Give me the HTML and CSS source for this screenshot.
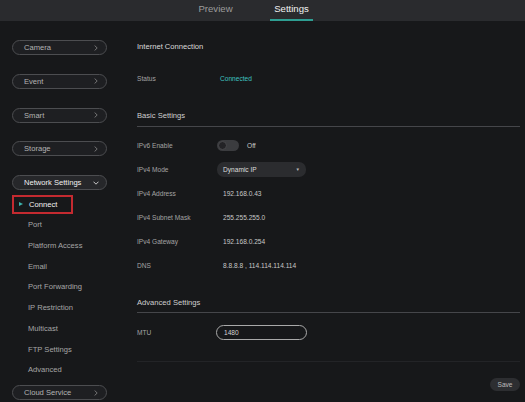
FILE: index.html
```html
<!DOCTYPE html>
<html>
<head>
<meta charset="utf-8">
<link rel="stylesheet" href="styles.css">
</head>
<body>
<div class="page">
  <header class="topbar">
    <div class="tab">Preview</div>
    <div class="tab active">Settings</div>
  </header>
  <div class="main">
    <nav class="sidebar">
      <div class="pill"><span>Camera</span><svg class="chev" viewBox="0 0 4 6"><path d="M0.6 0.5 L3.2 3 L0.6 5.5" fill="none" stroke="currentColor" stroke-width="0.8"/></svg></div>
      <div class="pill"><span>Event</span><svg class="chev" viewBox="0 0 4 6"><path d="M0.6 0.5 L3.2 3 L0.6 5.5" fill="none" stroke="currentColor" stroke-width="0.8"/></svg></div>
      <div class="pill"><span>Smart</span><svg class="chev" viewBox="0 0 4 6"><path d="M0.6 0.5 L3.2 3 L0.6 5.5" fill="none" stroke="currentColor" stroke-width="0.8"/></svg></div>
      <div class="pill"><span>Storage</span><svg class="chev" viewBox="0 0 4 6"><path d="M0.6 0.5 L3.2 3 L0.6 5.5" fill="none" stroke="currentColor" stroke-width="0.8"/></svg></div>
      <div class="pill open"><span>Network Settings</span><svg class="chev down" viewBox="0 0 6 4"><path d="M0.5 0.7 L3 3.2 L5.5 0.7" fill="none" stroke="currentColor" stroke-width="0.9"/></svg></div>
      <ul class="submenu">
        <li class="sub current"><span class="box"><span class="tri"></span>Connect</span></li>
        <li class="sub">Port</li>
        <li class="sub">Platform Access</li>
        <li class="sub">Email</li>
        <li class="sub">Port Forwarding</li>
        <li class="sub">IP Restriction</li>
        <li class="sub">Multicast</li>
        <li class="sub">FTP Settings</li>
        <li class="sub">Advanced</li>
      </ul>
      <div class="pill last"><span>Cloud Service</span><svg class="chev" viewBox="0 0 4 6"><path d="M0.6 0.5 L3.2 3 L0.6 5.5" fill="none" stroke="currentColor" stroke-width="0.8"/></svg></div>
    </nav>
    <section class="content">
      <h2 class="title">Internet Connection</h2>
      <div class="row status"><span class="label">Status</span><span class="connected">Connected</span></div>
      <h3 class="section">Basic Settings</h3>
      <div class="row"><span class="label">IPv6 Enable</span><span class="toggle"><span class="knob"></span></span><span class="off">Off</span></div>
      <div class="row"><span class="label">IPv4 Mode</span><span class="select">Dynamic IP<span class="caret">&#9660;</span></span></div>
      <div class="row"><span class="label">IPv4 Address</span><span class="value">192.168.0.43</span></div>
      <div class="row"><span class="label">IPv4 Subnet Mask</span><span class="value">255.255.255.0</span></div>
      <div class="row"><span class="label">IPv4 Gateway</span><span class="value">192.168.0.254</span></div>
      <div class="row"><span class="label">DNS</span><span class="value">8.8.8.8 , 114.114.114.114</span></div>
      <h3 class="section adv">Advanced Settings</h3>
      <div class="row mtu"><span class="label">MTU</span><span class="input">1480</span></div>
      <div class="faint"></div>
      <div class="actions"><button class="save">Save</button></div>
    </section>
  </div>
</div>
</body>
</html>
```
FILE: styles.css
```css
* { box-sizing: border-box; margin: 0; padding: 0; }
html, body { background: #17181a; }
body {
  width: 525px;
  height: 402px;
  overflow: hidden;
  font-family: "Liberation Sans", Arial, sans-serif;
  color: #b0b0b0;
}
.page { width: 525px; height: 402px; display: flex; flex-direction: column; }

.topbar {
  height: 21px;
  background: #2a2b2e;
  display: flex;
  padding-left: 194px;
  gap: 33px;
}
.tab {
  width: 43px;
  height: 21px;
  font-size: 9.6px;
  line-height: 17px;
  text-align: center;
  color: #9c9c9c;
}
.tab.active {
  color: #f2f2f2;
  border-bottom: 2px solid #2e9e92;
}

.main { flex: 1; display: flex; }

.sidebar {
  width: 120px;
  padding-top: 19px;
  padding-left: 12px;
  display: flex;
  flex-direction: column;
}
.pill {
  width: 95px;
  height: 15px;
  border: 1px solid #4c4d50;
  border-radius: 8px;
  background: #1e1f22;
  display: flex;
  align-items: center;
  justify-content: space-between;
  padding: 0 8px 0 11px;
  font-size: 7.6px;
  color: #b4b4b4;
  margin-bottom: 18.8px;
}
.pill.open {
  background: #26272a;
  color: #f0f0f0;
  margin-bottom: 3.7px;
}
.pill.last { margin-top: 5px; margin-bottom: 0; }
.chev { width: 4px; height: 6px; color: #8a8a8a; }
.chev.down { width: 6px; height: 4px; color: #dcdcdc; margin-right: -1px; }

.submenu { list-style: none; }
.sub {
  height: 20.7px;
  display: flex;
  align-items: center;
  padding-left: 16px;
  font-size: 7.6px;
  color: #a6a6a6;
}
.sub.current { padding-left: 0; }
.box {
  width: 61px;
  height: 19px;
  border: 2px solid #c42a30;
  display: flex;
  align-items: center;
  padding-left: 5px;
  color: #f4f4f4;
}
.tri {
  width: 0;
  height: 0;
  border-left: 4px solid #3cb3ad;
  border-top: 2.5px solid transparent;
  border-bottom: 2.5px solid transparent;
  margin-right: 6px;
}

.content {
  flex: 1;
  padding: 17px 5px 0 17px;
  display: flex;
  flex-direction: column;
}
.title {
  height: 18px;
  line-height: 18px;
  font-size: 7.6px;
  font-weight: normal;
  color: #dcdcdc;
}
.row {
  height: 24px;
  display: flex;
  align-items: center;
  font-size: 6.6px;
}
.row.status { margin-top: 13px; height: 18px; }
.label { width: 80px; color: #a4a4a4; flex-shrink: 0; }
.connected { color: #3fc3c0; padding-left: 3px; }
.value { color: #c8c8c8; padding-left: 6px; }
.section {
  height: 20px;
  line-height: 20px;
  font-size: 7.6px;
  font-weight: normal;
  color: #cfcfcf;
  border-bottom: 1px solid #45464a;
  margin-top: 19px;
  margin-bottom: 6px;
  height: 21px;
}
.section.adv { margin-top: 16px; margin-bottom: 7px; height: 20px; line-height: 19px; }

.toggle {
  width: 22px;
  height: 11px;
  border-radius: 6px;
  background: #3b3c3f;
  display: flex;
  align-items: center;
  padding-left: 1px;
}
.knob {
  width: 9px;
  height: 9px;
  border-radius: 50%;
  background: #232326;
  border: 1.5px solid #49494c;
}
.off { color: #c8c8c8; margin-left: 8px; }
.select {
  width: 89px;
  height: 15px;
  border-radius: 7px;
  background: #2b2c2f;
  color: #dcdcdc;
  display: flex;
  align-items: center;
  justify-content: space-between;
  padding: 0 6px 0 6px;
}
.caret { font-size: 4.5px; color: #b8b8b8; }
.input {
  width: 91px;
  height: 15px;
  border: 1.5px solid #a9a9a9;
  border-radius: 8px;
  color: #d4d4d4;
  display: flex;
  align-items: center;
  padding-left: 7px;
  margin-left: -1px;
}
.faint {
  height: 1px;
  background: #232427;
  margin-top: 17px;
}
.actions {
  display: flex;
  justify-content: flex-end;
  margin-top: 16px;
}
.save {
  width: 30px;
  height: 13px;
  border: none;
  border-radius: 7px;
  background: #2d2e31;
  color: #bdbdbd;
  font-family: "Liberation Sans", Arial, sans-serif;
  font-size: 6.6px;
}
```
